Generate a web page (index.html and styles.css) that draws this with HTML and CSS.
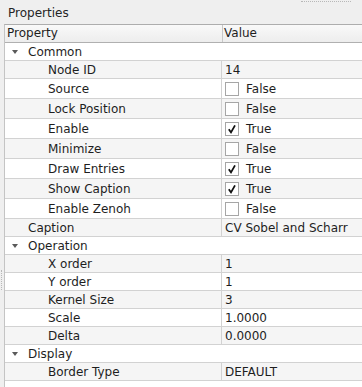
FILE: index.html
```html
<!DOCTYPE html>
<html>
<head>
<meta charset="utf-8">
<link rel="stylesheet" href="styles.css">
</head>
<body>
<div class="dock">
  <div class="title">Properties</div>
  <div class="grip-top"></div>
  <div class="grip-left"></div>
  <div class="tree">
    <div class="header">
      <div class="hcell name">Property</div>
      <div class="hcell value">Value</div>
    </div>
    <div class="row group odd"><span class="arrow"></span><span class="gtext">Common</span></div>
    <div class="row even"><div class="name child">Node ID</div><div class="value">14</div></div>
    <div class="row odd tall"><div class="name child">Source</div><div class="value"><span class="cb"></span>False</div></div>
    <div class="row even tall"><div class="name child">Lock Position</div><div class="value"><span class="cb"></span>False</div></div>
    <div class="row odd tall"><div class="name child">Enable</div><div class="value"><span class="cb"><svg viewBox="0 0 12 12" width="12" height="12"><path d="M2.8 6.2 L5 9.4 L9 2.4" fill="none" stroke="#111" stroke-width="1.8"/></svg></span>True</div></div>
    <div class="row even tall"><div class="name child">Minimize</div><div class="value"><span class="cb"></span>False</div></div>
    <div class="row odd tall"><div class="name child">Draw Entries</div><div class="value"><span class="cb"><svg viewBox="0 0 12 12" width="12" height="12"><path d="M2.8 6.2 L5 9.4 L9 2.4" fill="none" stroke="#111" stroke-width="1.8"/></svg></span>True</div></div>
    <div class="row even tall"><div class="name child">Show Caption</div><div class="value"><span class="cb"><svg viewBox="0 0 12 12" width="12" height="12"><path d="M2.8 6.2 L5 9.4 L9 2.4" fill="none" stroke="#111" stroke-width="1.8"/></svg></span>True</div></div>
    <div class="row odd tall"><div class="name child">Enable Zenoh</div><div class="value"><span class="cb"></span>False</div></div>
    <div class="row even"><div class="name top">Caption</div><div class="value">CV Sobel and Scharr</div></div>
    <div class="row group odd"><span class="arrow"></span><span class="gtext">Operation</span></div>
    <div class="row even"><div class="name child">X order</div><div class="value">1</div></div>
    <div class="row odd"><div class="name child">Y order</div><div class="value">1</div></div>
    <div class="row even"><div class="name child">Kernel Size</div><div class="value">3</div></div>
    <div class="row odd"><div class="name child">Scale</div><div class="value">1.0000</div></div>
    <div class="row even"><div class="name child">Delta</div><div class="value">0.0000</div></div>
    <div class="row group odd"><span class="arrow"></span><span class="gtext">Display</span></div>
    <div class="row even"><div class="name child">Border Type</div><div class="value">DEFAULT</div></div>
  </div>
</div>
</body>
</html>
```

FILE: styles.css
```css
html, body {
  margin: 0;
  padding: 0;
  background: #efefef;
  font-family: "DejaVu Sans", sans-serif;
  font-size: 12px;
  color: #1e1e1e;
  overflow: hidden;
}
.dock {
  position: relative;
  width: 362px;
  height: 387px;
}
.title {
  height: 24px;
  line-height: 26px;
  padding-left: 8px;
  box-sizing: border-box;
  color: #252525;
}
.grip-top {
  position: absolute;
  left: 301px;
  top: 1px;
  width: 50px;
  height: 1px;
  border-top: 1px dotted #b8b8b8;
}
.grip-left {
  position: absolute;
  left: 1px;
  top: 270px;
  width: 1px;
  height: 20px;
  border-left: 1px dotted #b8b8b8;
}
.tree {
  margin-left: 4px;
  border-left: 1px solid #c4c4c4;
  border-top: 1px solid #adadad;
  background: #ffffff;
  height: 363px;
}
.header {
  display: flex;
  height: 17px;
  border-bottom: 1px solid #b0b0b0;
  background: linear-gradient(#f9f9f9, #ededed);
}
.hcell {
  line-height: 17px;
}
.hcell.name {
  width: 215px;
  padding-left: 2px;
  border-right: 1px solid #c8c8c8;
}
.hcell.value {
  padding-left: 1px;
}
.row {
  display: flex;
  height: 17px;
  border-bottom: 1px solid #d2d2d2;
  align-items: center;
}
.row.tall {
  height: 19px;
}
.row.odd {
  background: #ffffff;
}
.row.even {
  background: #f5f5f5;
}
.row .name {
  width: 217px;
  height: 100%;
  border-right: 1px solid #d2d2d2;
  display: flex;
  align-items: center;
  box-sizing: border-box;
}
.row .name.child {
  padding-left: 43px;
}
.row .name.top {
  padding-left: 23px;
}
.row .value {
  padding-left: 3px;
  display: flex;
  align-items: center;
  height: 100%;
}
.arrow {
  width: 0;
  height: 0;
  margin-left: 7px;
  margin-right: 10px;
  border-left: 3px solid transparent;
  border-right: 3px solid transparent;
  border-top: 4px solid #5a5a5a;
}
.cb {
  width: 12px;
  height: 12px;
  border: 1px solid #a6a6a6;
  background: #ffffff;
  margin-right: 7px;
  display: inline-flex;
  align-items: center;
  justify-content: center;
}
.cb svg {
  display: block;
}
```
